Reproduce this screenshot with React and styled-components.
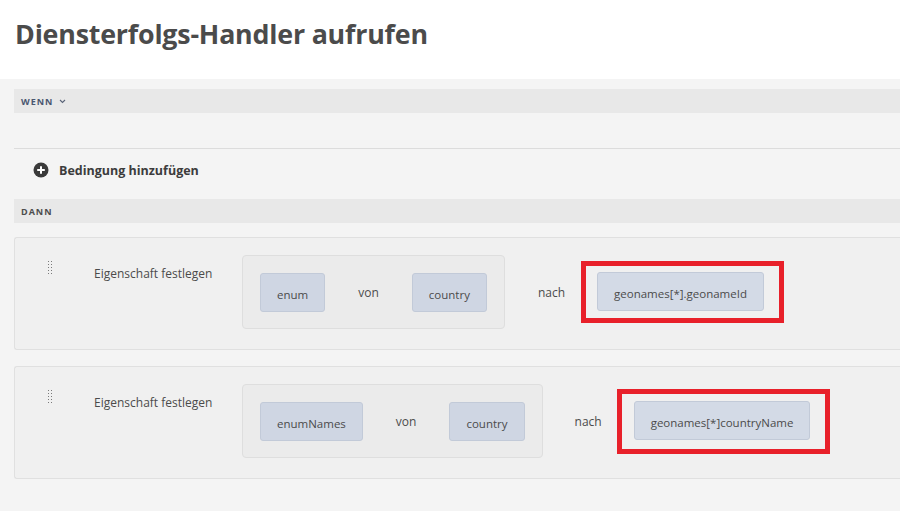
import React from "react";
import styled, { createGlobalStyle } from "styled-components";

const GlobalStyle = createGlobalStyle`
  html, body {
    margin: 0;
    padding: 0;
    background: #f4f4f4;
    font-family: "Open Sans", "Noto Sans", sans-serif;
    overflow: hidden;
  }
`;

const Header = styled.header`
  height: 79px;
  background: #ffffff;
  padding: 0 15px;
  display: flex;
  align-items: center;
`;

const Title = styled.h1`
  margin: 0 0 12px;
  font-size: 26.8px;
  font-weight: 700;
  color: #4b4b4b;
  letter-spacing: -0.2px;
`;

const Body = styled.main`
  padding: 10px 0 0 14px;
`;

const SectionBar = styled.div`
  height: 24px;
  background: #e8e8e8;
  display: flex;
  align-items: center;
  gap: 6px;
  padding-left: 7px;
  font-size: 9px;
  font-weight: 700;
  letter-spacing: 1px;
  color: ${(p) => p.$color || "#4d4d4d"};
`;

const DropArea = styled.div`
  height: 35px;
  border-bottom: 1px solid #dcdcdc;
`;

const AddRow = styled.div`
  height: 50px;
  box-sizing: border-box;
  padding: 0 0 8px 19px;
  display: flex;
  align-items: center;
  gap: 10px;
  font-size: 12.5px;
  font-weight: 700;
  color: #3c3c3c;
`;

const Cards = styled.div`
  display: flex;
  flex-direction: column;
  gap: 16px;
  padding-top: 14px;
`;

const Card = styled.div`
  background: #f0f0f0;
  border: 1px solid #e0e0e0;
  border-right: none;
  border-radius: 3px 0 0 3px;
  padding: 17px 0 20px;
  display: flex;
  align-items: flex-start;
`;

const Handle = styled.div`
  width: 46px;
  padding: 6px 0 0 33px;
  display: flex;
`;

const Label = styled.div`
  width: 148px;
  padding-top: 10px;
  font-size: 12px;
  color: #4b4b4b;
  white-space: nowrap;
`;

const Group = styled.div`
  display: flex;
  align-items: center;
`;

const Operands = styled.div`
  display: flex;
  align-items: center;
  gap: 33px;
  padding: 17px 17px 16px 17px;
  background: #ebebeb;
  border: 1px solid #dedede;
  border-radius: 4px;
`;

const Word = styled.span`
  font-size: 12px;
  color: #4b4b4b;
  margin: ${(p) => p.$margin || "0"};
`;

const Chip = styled.div`
  height: 39px;
  box-sizing: border-box;
  padding: 4px 16px 0;
  display: flex;
  align-items: center;
  background: ${(p) => (p.$light ? "#d3dae6" : "#cfd6e3")};
  border: 1px solid #c2cad8;
  border-radius: 3px;
  font-size: 11.5px;
  color: #4b4b4b;
  white-space: nowrap;
`;

const Highlight = styled.div`
  border: 5px solid #e8202a;
  padding: ${(p) => p.$pad};
  display: flex;
`;

function Chevron() {
  return (
    <svg width="7" height="5" viewBox="0 0 7 5">
      <path d="M1 1l2.5 2.5L6 1" fill="none" stroke="#5a6478" strokeWidth="1.1" />
    </svg>
  );
}

function PlusCircle() {
  return (
    <svg width="16" height="16" viewBox="0 0 16 16">
      <circle cx="8" cy="8" r="7.5" fill="#3a3a3a" />
      <path d="M8 4.2v7.6M4.2 8h7.6" stroke="#ffffff" strokeWidth="2" />
    </svg>
  );
}

function DragDots() {
  const dots = [];
  for (let r = 0; r < 5; r++) {
    for (let c = 0; c < 2; c++) {
      dots.push(<rect key={`${r}-${c}`} x={c * 3} y={r * 3} width="1" height="1" fill="#7a7a7a" />);
    }
  }
  return (
    <svg width="4" height="14" viewBox="0 0 4 14">
      {dots}
    </svg>
  );
}

const rules = [
  {
    property: "enum",
    source: "country",
    target: "geonames[*].geonameId",
    nach: "0 16px 0 33px",
    pad: "6px 15px 7px 11px",
  },
  {
    property: "enumNames",
    source: "country",
    target: "geonames[*]countryName",
    nach: "0 15px 0 32px",
    pad: "7px 15px 9px 12px",
  },
];

export default function App() {
  return (
    <>
      <GlobalStyle />
      <Header>
        <Title>Diensterfolgs-Handler aufrufen</Title>
      </Header>
      <Body>
        <SectionBar $color="#4a5670">
          WENN <Chevron />
        </SectionBar>
        <DropArea />
        <AddRow>
          <PlusCircle />
          Bedingung hinzufügen
        </AddRow>
        <SectionBar>DANN</SectionBar>
        <Cards>
          {rules.map((rule) => (
            <Card key={rule.target}>
              <Handle>
                <DragDots />
              </Handle>
              <Label>Eigenschaft festlegen</Label>
              <Group>
                <Operands>
                  <Chip>{rule.property}</Chip>
                  <Word>von</Word>
                  <Chip>{rule.source}</Chip>
                </Operands>
                <Word $margin={rule.nach}>nach</Word>
                <Highlight $pad={rule.pad}>
                  <Chip $light>{rule.target}</Chip>
                </Highlight>
              </Group>
            </Card>
          ))}
        </Cards>
      </Body>
    </>
  );
}
